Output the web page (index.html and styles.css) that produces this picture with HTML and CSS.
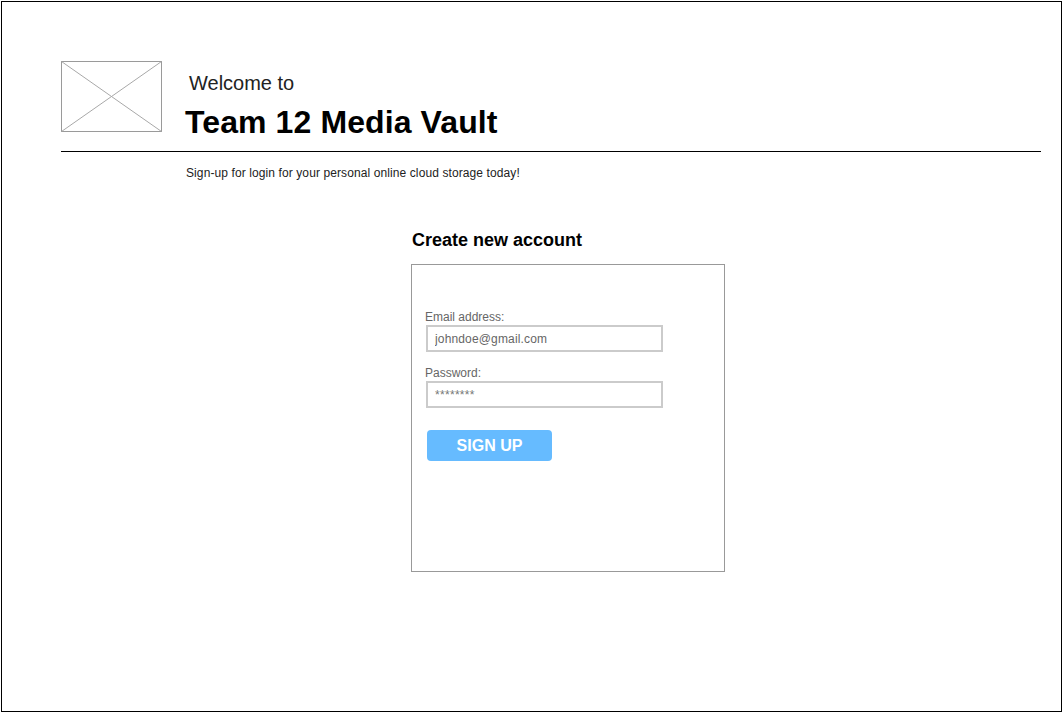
FILE: index.html
```html
<!DOCTYPE html>
<html lang="en">
<head>
<meta charset="utf-8">
<title>Team 12 Media Vault - Sign up</title>
<link rel="stylesheet" href="styles.css">
</head>
<body>
<div class="frame">
  <header class="header">
    <div class="logo">
      <svg width="101" height="71" viewBox="0 0 101 71">
        <rect x="0.5" y="0.5" width="100" height="70" fill="#fff" stroke="#9a9a9a"/>
        <line x1="0.5" y1="0.5" x2="100.5" y2="70.5" stroke="#a8a8a8"/>
        <line x1="100.5" y1="0.5" x2="0.5" y2="70.5" stroke="#a8a8a8"/>
      </svg>
    </div>
    <div class="titles">
      <div class="welcome">Welcome to</div>
      <h1 class="title">Team 12 Media Vault</h1>
    </div>
  </header>
  <div class="rule"></div>
  <p class="tagline">Sign-up for login for your personal online cloud storage today!</p>

  <section class="signup">
    <h2 class="signup-title">Create new account</h2>
    <form class="card">
      <label class="label" for="email">Email address:</label>
      <input class="field" id="email" type="text" value="johndoe@gmail.com" readonly>
      <label class="label label-gap" for="pw">Password:</label>
      <input class="field field-pw" id="pw" type="text" value="********" readonly>
      <button class="btn" type="button">SIGN UP</button>
    </form>
  </section>
</div>
</body>
</html>
```

FILE: styles.css
```css
* { box-sizing: border-box; }

html, body {
  margin: 0;
  padding: 0;
  background: #fff;
  overflow: hidden;
}

body {
  padding: 1px 0 0 1px;
  font-family: "Liberation Sans", Arial, sans-serif;
  color: #000;
}

.frame {
  width: 1061px;
  height: 711px;
  border: 1px solid #000;
  padding: 59px 0 0 59px;
}

.header {
  display: flex;
  align-items: flex-start;
  height: 79px;
}

.logo {
  width: 101px;
  height: 71px;
  flex: none;
}

.logo svg { display: block; }

.titles {
  margin-left: 24px;
}

.welcome {
  margin-top: 10px;
  padding-left: 3px;
  font-size: 20px;
  line-height: 24px;
  color: #222;
}

.title {
  margin: 9px 0 0 -1px;
  font-size: 32px;
  line-height: 36px;
  font-weight: bold;
  letter-spacing: 0.1px;
  color: #000;
}

.rule {
  width: 980px;
  margin-top: 11px;
  border-top: 1px solid #000;
}

.tagline {
  margin: 15px 0 0 125px;
  font-size: 12px;
  line-height: 13px;
  letter-spacing: 0.1px;
  color: #222;
}

.signup {
  margin: 49px 0 0 350px;
}

.signup-title {
  margin: 0 0 0 1px;
  font-size: 18px;
  line-height: 22px;
  font-weight: bold;
  color: #000;
}

.card {
  width: 314px;
  height: 308px;
  margin-top: 13px;
  border: 1px solid #999;
  padding: 45px 0 0 13px;
  display: flex;
  flex-direction: column;
  align-items: flex-start;
}

.label {
  font-size: 12px;
  line-height: 14px;
  color: #666;
}

.label-gap { margin-top: 14px; }

.field {
  margin: 1px 0 0 1px;
  width: 237px;
  height: 27px;
  border: 2px solid #cbcbcb;
  padding: 0 0 0 7px;
  font-family: "Liberation Sans", Arial, sans-serif;
  font-size: 12px;
  letter-spacing: 0.15px;
  color: #666;
  background: #fff;
  outline: none;
}

.field-pw {
  font-size: 12px;
  letter-spacing: 0.3px;
  color: #777;
}

.btn {
  margin: 22px 0 0 2px;
  width: 125px;
  height: 31px;
  border: none;
  border-radius: 4px;
  background: #66bbff;
  color: #fff;
  font-family: "Liberation Sans", Arial, sans-serif;
  font-size: 16px;
  font-weight: bold;
  padding: 0;
  cursor: pointer;
}
```
